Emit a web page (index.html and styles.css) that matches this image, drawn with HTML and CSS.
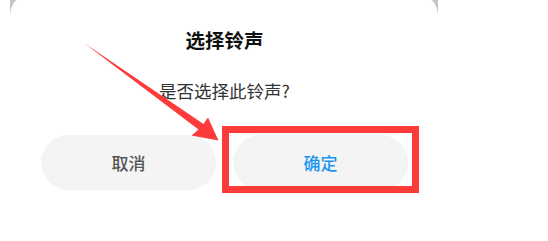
FILE: index.html
```html
<!DOCTYPE html>
<html lang="zh-CN">
<head>
  <meta charset="UTF-8">
  <title>选择铃声</title>
  <link rel="stylesheet" href="styles.css">
</head>
<body>

  <!-- 弹窗 -->
  <div class="screen">
    <div class="dialog">
      <div class="title">选择铃声</div>
      <div class="message">是否选择此铃声?</div>
      <div class="actions">
        <button class="btn cancel">取消</button>
        <button class="btn ok">确定</button>
      </div>
    </div>
  </div>

  <!-- 标注 -->
  <div class="mark-box"></div>
  <svg class="mark-arrow" width="548" height="241" viewBox="0 0 548 241">
    <polygon points="84,43 203.5,124 208,117.5 218.5,140.5 191.5,135.5 198.5,129.5" fill="#fd3b3b"/>
  </svg>

</body>
</html>
```

FILE: styles.css
```css
* { box-sizing: border-box; }
html, body {
  margin: 0;
  padding: 0;
  width: 548px;
  height: 241px;
  overflow: hidden;
  background: #fff;
  font-family: 'Noto Sans CJK SC', 'Noto Sans', sans-serif;
  position: relative;
}

.screen {
  margin-left: 10px;
  width: 428px;
  height: 241px;
  background: #c6c6c6;
  overflow: hidden;
}

.dialog {
  margin-top: -8px;
  height: 260px;
  background: #fff;
  border-radius: 24px 24px 0 0;
  padding: 35px 30px 0 31px;
  display: flex;
  flex-direction: column;
  align-items: center;
}

.title {
  font-size: 19.5px;
  line-height: 26px;
  font-weight: bold;
  color: #111;
}

.message {
  margin-top: 26px;
  font-size: 17.5px;
  line-height: 24px;
  color: #333;
}

.actions {
  margin-top: 32px;
  width: 100%;
  display: flex;
  gap: 17px;
}

.btn {
  flex: 1;
  height: 55px;
  border: none;
  border-radius: 28px;
  background: #f4f4f4;
  font-family: inherit;
  font-size: 17px;
  font-weight: 500;
  cursor: pointer;
}

.cancel { color: #555; }
.ok { color: #1a96f2; }

/* 红色标注 */
.mark-box {
  position: absolute;
  left: 222px;
  top: 126px;
  width: 197px;
  height: 67px;
  border: 7px solid #fd3b3b;
}

.mark-arrow {
  position: absolute;
  left: 0;
  top: 0;
}
```
